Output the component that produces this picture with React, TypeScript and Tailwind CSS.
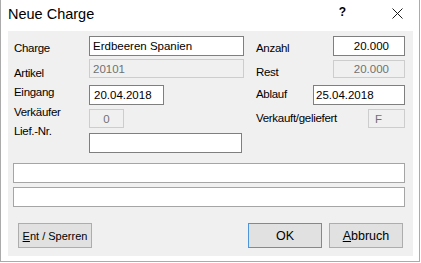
import React from "react";

function Field({
  w,
  h,
  mt = 0,
  disabled = false,
  align = "left",
  pl = "pl-[3px]",
  children,
}: {
  w: string;
  h: string;
  mt?: number;
  disabled?: boolean;
  align?: "left" | "right" | "center";
  pl?: string;
  children?: React.ReactNode;
}) {
  const base = disabled
    ? "border-[#cdcdcd] bg-[#f0f0f0] text-[#707070]"
    : "border-[#7f7f7f] bg-white text-black";
  const al =
    align === "right" ? "justify-end pr-[15px]" : align === "center" ? "justify-center" : pl;
  return (
    <div
      className={`${w} ${h} ${base} ${al} border flex items-center text-[11.5px] leading-[14px] whitespace-nowrap shrink-0`}
      style={{ marginTop: mt }}
    >
      {children}
    </div>
  );
}

function Label({ mt = 0, children }: { mt?: number; children: React.ReactNode }) {
  return (
    <div
      className="h-[14px] text-[11.5px] leading-[14px] tracking-[-0.3px] text-black whitespace-nowrap"
      style={{ marginTop: mt }}
    >
      {children}
    </div>
  );
}

export default function App() {
  return (
    <div className="w-[421px] h-[263px] bg-white font-['Liberation_Sans',Arial,sans-serif]">
      <div className="w-[420px] h-[262px] border-x border-b border-[#ababab] bg-white flex flex-col">
        {/* Title bar */}
        <div className="h-[31px] flex items-start shrink-0">
          <span className="ml-[7px] mt-[5px] text-[14.5px] leading-[18px] text-black">Neue Charge</span>
          <span className="ml-auto mt-[5px] text-[12px] leading-[14px] font-bold text-black">?</span>
          <svg className="ml-[46px] mr-[16px] mt-[8px]" width="11" height="11" viewBox="0 0 11 11">
            <path d="M0.5 0.5 L10.5 10.5 M10.5 0.5 L0.5 10.5" stroke="#1a1a1a" strokeWidth="1" fill="none" />
          </svg>
        </div>

        {/* Client area */}
        <div className="ml-[7px] w-[405px] h-[225px] bg-[#f0f0f0] flex flex-col shrink-0">
          <div className="h-[122px] flex shrink-0">
            {/* left labels */}
            <div className="ml-[6px] w-[75px] flex flex-col pt-[10px]">
              <Label>Charge</Label>
              <Label mt={11}>Artikel</Label>
              <Label mt={5}>Eingang</Label>
              <Label mt={6}>Verkäufer</Label>
              <Label mt={5}>Lief.-Nr.</Label>
            </div>
            {/* left inputs */}
            <div className="w-[155px] flex flex-col pt-[5px]">
              <Field w="w-[155px]" h="h-[20px]">Erdbeeren Spanien</Field>
              <Field w="w-[155px]" h="h-[19px]" mt={3} disabled>20101</Field>
              <Field w="w-[75px]" h="h-[20px]" mt={7} pl="pl-[4px]">20.04.2018</Field>
              <Field w="w-[35px]" h="h-[19px]" mt={4} disabled align="center">0</Field>
              <Field w="w-[153px]" h="h-[20px]" mt={5} />
            </div>
            {/* right block */}
            <div className="ml-[12px] w-[149px] flex">
              <div className="w-0 flex flex-col pt-[10px]">
                <Label>Anzahl</Label>
                <Label mt={10}>Rest</Label>
                <Label mt={8}>Ablauf</Label>
                <Label mt={10}>Verkauft/geliefert</Label>
              </div>
              <div className="flex-1 flex flex-col items-end pt-[5px]">
                <Field w="w-[72px]" h="h-[20px]" align="right">20.000</Field>
                <Field w="w-[72px]" h="h-[18px]" mt={4} disabled align="right">20.000</Field>
                <Field w="w-[92px]" h="h-[20px]" mt={7} pl="pl-[2px]">25.04.2018</Field>
                <Field w="w-[37px]" h="h-[19px]" mt={4} disabled pl="pl-[6px]">F</Field>
              </div>
            </div>
          </div>

          <div className="ml-[5px] mt-[10px] w-[392px] h-[20px] border border-[#a5a5a5] bg-white shrink-0" />
          <div className="ml-[5px] mt-[4px] w-[392px] h-[20px] border border-[#a5a5a5] bg-white shrink-0" />

          <div className="mt-[16px] flex shrink-0">
            <div className="ml-[10px] w-[74px] h-[25px] border border-[#adadad] bg-[#e1e1e1] flex items-center justify-center text-[11px] leading-[14px] text-black">
              <span>
                <span className="underline">E</span>nt / Sperren
              </span>
            </div>
            <div className="ml-auto w-[74px] h-[25px] border border-[#4f96d8] bg-[#e1e1e1] flex items-center justify-center text-[12.5px] leading-[14px] text-black">
              OK
            </div>
            <div className="ml-[7px] mr-[10px] w-[74px] h-[25px] border border-[#adadad] bg-[#e1e1e1] flex items-center justify-center text-[12.5px] leading-[14px] text-black">
              <span>
                <span className="underline">A</span>bbruch
              </span>
            </div>
          </div>
        </div>
      </div>
    </div>
  );
}
